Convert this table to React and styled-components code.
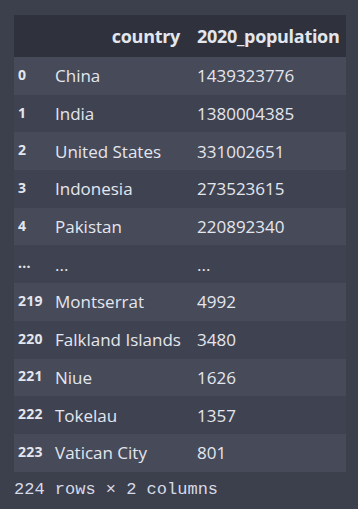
import styled, { createGlobalStyle } from 'styled-components';

const GlobalStyle = createGlobalStyle`
  html, body {
    margin: 0;
    padding: 0;
    background: #3c404d;
  }
`;

const rows = [
  ['0', 'China', '1439323776'],
  ['1', 'India', '1380004385'],
  ['2', 'United States', '331002651'],
  ['3', 'Indonesia', '273523615'],
  ['4', 'Pakistan', '220892340'],
  ['...', '...', '...'],
  ['219', 'Montserrat', '4992'],
  ['220', 'Falkland Islands', '3480'],
  ['221', 'Niue', '1626'],
  ['222', 'Tokelau', '1357'],
  ['223', 'Vatican City', '801'],
];

const Output = styled.div`
  padding: 15px 12px 0 14px;
  font-family: "Open Sans", "Noto Sans", sans-serif;
  color: #e4e6ee;
`;

const Table = styled.table`
  width: 332px;
  border-collapse: collapse;
  table-layout: fixed;
`;

const HeadRow = styled.tr`
  height: 42px;
  background: #2f323c;
`;

const HeadCell = styled.th`
  font-size: 18px;
  font-weight: 700;
  text-align: ${p => (p.$left ? 'left' : 'right')};
  padding: ${p => (p.$left ? '0 2px 0 9px' : '0 8px 0 0')};
  white-space: nowrap;
  letter-spacing: -0.3px;
`;

const Row = styled.tr`
  height: 37.7px;
  background: ${p => (p.$odd ? '#3f4351' : '#464a59')};
`;

const IndexCell = styled.td`
  font-size: 14px;
  font-weight: 700;
  padding: 0 0 3px 4px;
  white-space: nowrap;
  letter-spacing: 0.2px;
`;

const Cell = styled.td`
  font-size: 17px;
  padding: ${p => (p.$num ? '0 4px 0 9px' : '0 4px 0 5px')};
  white-space: nowrap;
  overflow: hidden;
`;

const Footer = styled.div`
  font-family: "Liberation Mono", "DejaVu Sans Mono", monospace;
  font-size: 17px;
  color: #d6dae8;
  padding-top: 8px;
`;

export default function App() {
  return (
    <>
      <GlobalStyle />
      <Output>
        <Table>
          <colgroup>
            <col style={{ width: 36 }} />
            <col style={{ width: 138 }} />
            <col style={{ width: 158 }} />
          </colgroup>
          <thead>
            <HeadRow>
              <HeadCell />
              <HeadCell>country</HeadCell>
              <HeadCell $left>2020_population</HeadCell>
            </HeadRow>
          </thead>
          <tbody>
            {rows.map((r, i) => (
              <Row key={r[0] + i} $odd={i % 2 === 1}>
                <IndexCell>{r[0]}</IndexCell>
                <Cell>{r[1]}</Cell>
                <Cell $num>{r[2]}</Cell>
              </Row>
            ))}
          </tbody>
        </Table>
        <Footer>224 rows × 2 columns</Footer>
      </Output>
    </>
  );
}
